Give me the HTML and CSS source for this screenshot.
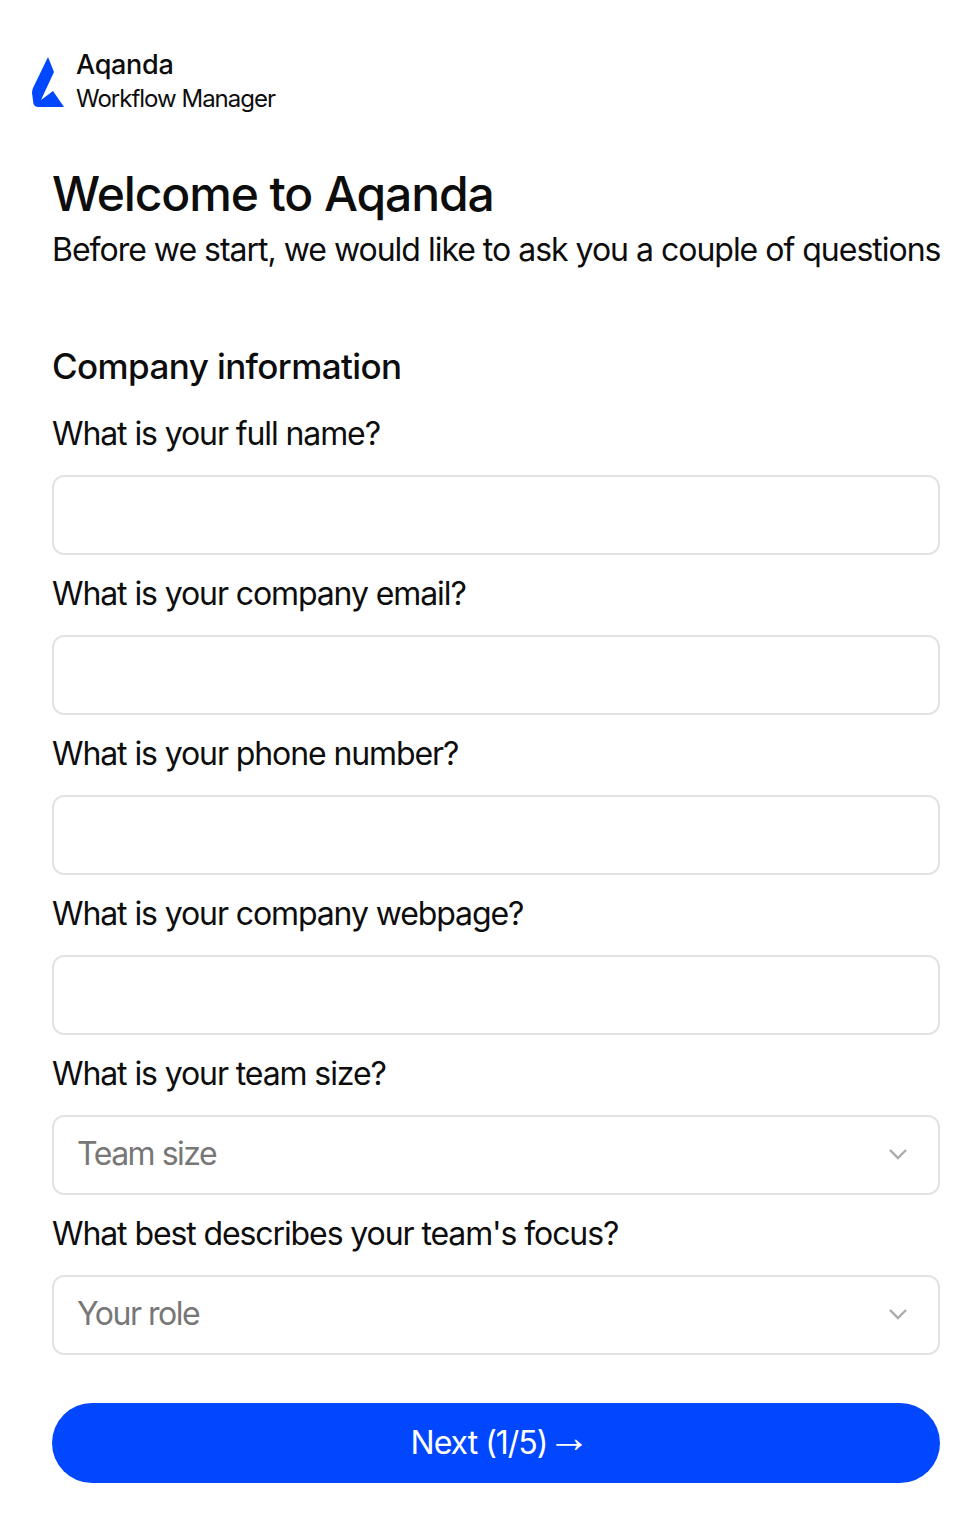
FILE: index.html
```html
<!DOCTYPE html>
<html lang="en">
<head>
<meta charset="utf-8">
<title>Aqanda</title>
<link rel="stylesheet" href="styles.css">
</head>
<body>
<header class="brand">
<svg class="logo" viewBox="0 0 32 52" width="32" height="52"><path d="M16 1 L22 16 L9 44 L21 35 L32 51 L6 51 Q3 51 1.500 48 L0 37 Q0 34 1 32 Z" fill="#0047ff"/></svg>
<div class="brand-text"><div class="brand-name">Aqanda</div><div class="brand-sub">Workflow Manager</div></div>
</header>
<main class="content">
<h1>Welcome to Aqanda</h1>
<p class="lead">Before we start, we would like to ask you a couple of questions</p>
<h2>Company information</h2>
<form class="form">
<label class="label">What is your full name?</label><input class="field" type="text">
<label class="label">What is your company email?</label><input class="field" type="text">
<label class="label">What is your phone number?</label><input class="field" type="text">
<label class="label">What is your company webpage?</label><input class="field" type="text">
<label class="label">What is your team size?</label>
<div class="field select"><span>Team size</span><svg viewBox="0 0 20 12" width="20" height="12"><path d="M2 2l8 8 8-8" fill="none" stroke="#aaaaaa" stroke-width="2.400"/></svg></div>
<label class="label">What best describes your team's focus?</label>
<div class="field select"><span>Your role</span><svg viewBox="0 0 20 12" width="20" height="12"><path d="M2 2l8 8 8-8" fill="none" stroke="#aaaaaa" stroke-width="2.400"/></svg></div>
<button class="next" type="button"><span>Next (1/5)</span><span class="arrow">→</span></button>
</form>
</main>
</body>
</html>
```
FILE: styles.css
```css
* { box-sizing: border-box; }
html, body { margin: 0; background: #fff; }
body { font-family: Inter, "Liberation Sans", sans-serif; color: #0d0d0d; height: 1520px; overflow: hidden; }
.brand { display: flex; align-items: center; gap: 12px; padding: 41px 0 0 32px; height: 122px; }
.logo { display: block; margin-top: 0; }
.brand-name { font-size: 27px; font-weight: 500; line-height: 34px; letter-spacing: -0.3px; }
.brand-sub { font-size: 24px; line-height: 34px; letter-spacing: -1px; }
.content { padding: 0 38px 0 52px; }
h1 { margin: 39px 0 0; font-size: 48px; font-weight: 500; line-height: 66px; letter-spacing: -1.1px; }
.lead { margin: 1px 0 0; font-size: 32px; line-height: 44px; letter-spacing: -1.010px; white-space: nowrap; }
h2 { margin: 72px 0 0; font-size: 35px; font-weight: 500; line-height: 44px; letter-spacing: -0.6px; }
.form { display: flex; flex-direction: column; margin-top: 7px; }
.label { display: block; height: 80px; font-size: 32px; line-height: 78px; letter-spacing: -1.1px; }
.field { display: flex; width: 100%; height: 80px; border: 2px solid #e2e2e2; border-radius: 12px; background: #fff; }
.select { align-items: center; justify-content: space-between; padding: 0 30px 2px 23px; font-size: 32px; color: #777; letter-spacing: -1.500px; line-height: 74px; }
.next { display: flex; align-items: center; justify-content: center; margin-top: 48px; height: 80px; padding: 0 0 2px 8px; border: 0; border-radius: 40px; background: #0047ff; color: #fff; font: inherit; font-size: 32px; letter-spacing: -1px; }
.arrow { font-family: "Liberation Sans", sans-serif; font-size: 43px; line-height: 40px; margin: 0 0 10px 0; }
```
